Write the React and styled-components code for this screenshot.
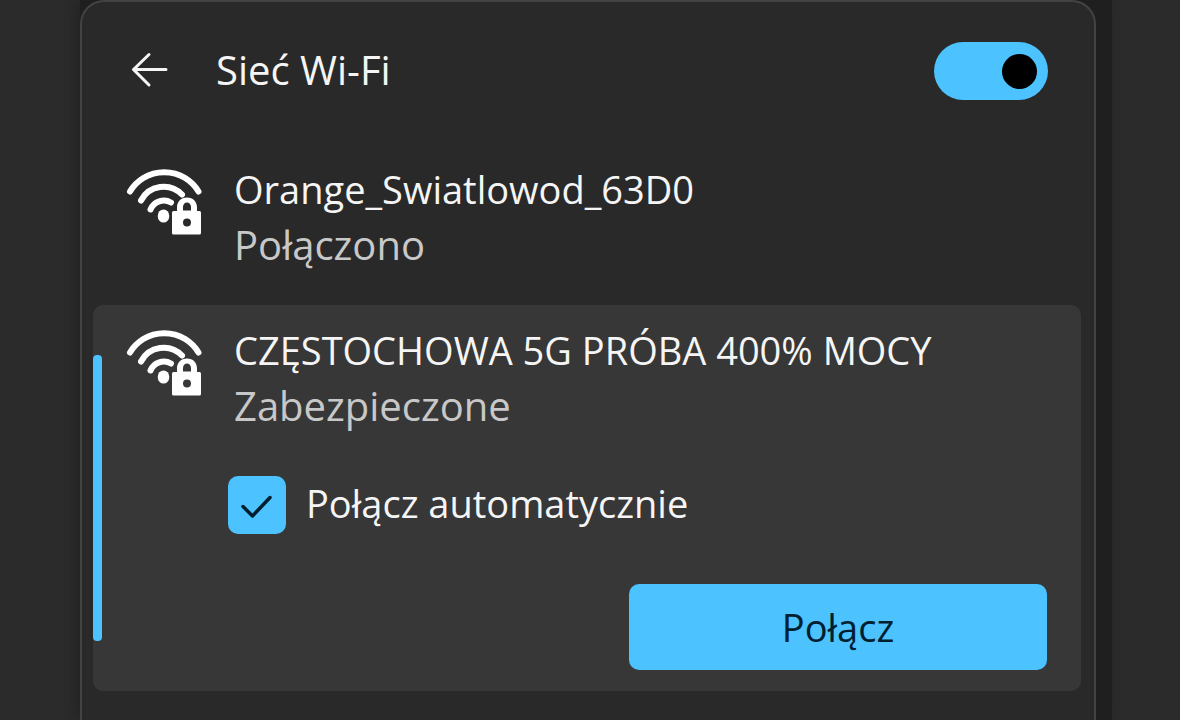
import React, { useState } from 'react';
import styled, { createGlobalStyle } from 'styled-components';

const colors = {
  desktop: '#2b2b2b',
  shadow: '#1f1f1f',
  panel: '#292929',
  border: '#434343',
  selected: '#373737',
  accent: '#4cc2ff',
  onAccent: '#00202f',
  text: '#f5f5f5',
  muted: '#c8c8c8'
};

const App = () => {
  const [enabled, setEnabled] = useState(true);
  const [autoConnect, setAutoConnect] = useState(true);

  return (
    <Desktop>
      <GlobalStyle />
      <Shade>
        <Panel>
          <Header>
            <BackButton type="button" aria-label="Wstecz">
              <BackIcon />
            </BackButton>
            <Title id="wifi-title">Sieć Wi-Fi</Title>
            <Switch
              type="checkbox"
              role="switch"
              aria-labelledby="wifi-title"
              checked={enabled}
              onChange={(e) => setEnabled(e.target.checked)}
            />
          </Header>

          <NetworkList>
            <Network>
              <NetworkRow name="Orange_Swiatlowod_63D0" status="Połączono" />
            </Network>

            <Network $selected>
              <NetworkRow name="CZĘSTOCHOWA 5G PRÓBA 400% MOCY" status="Zabezpieczone" />
              <Option htmlFor="auto-connect">
                <CheckWrapper>
                  <Checkbox
                    type="checkbox"
                    id="auto-connect"
                    checked={autoConnect}
                    onChange={(e) => setAutoConnect(e.target.checked)}
                  />
                  {autoConnect && <CheckIcon />}
                </CheckWrapper>
                Połącz automatycznie
              </Option>
              <Actions>
                <ConnectButton type="button">Połącz</ConnectButton>
              </Actions>
            </Network>
          </NetworkList>
        </Panel>
      </Shade>
    </Desktop>
  );
};

const NetworkRow = ({ name, status }) => (
  <Row>
    <WifiLockIcon />
    <div>
      <NetworkName>{name}</NetworkName>
      <NetworkStatus>{status}</NetworkStatus>
    </div>
  </Row>
);

const BackIcon = () => (
  <svg width="40" height="40" viewBox="0 0 40 40" fill="none" stroke="currentColor" strokeWidth="3" strokeLinecap="round" strokeLinejoin="round" aria-hidden="true">
    <path d="M37 18.5H4.5M20 3.5L4.5 18.5L20 34" />
  </svg>
);

const WifiLockIcon = () => (
  <WifiSvg width="80" height="76" viewBox="0 -4 80 76" fill="none" stroke="#fff" strokeWidth="6" strokeLinecap="round" aria-hidden="true">
    <path d="M5 26.5A40 40 0 0 1 73.5 26.5" />
    <path d="M16 35.5A25.5 25.5 0 0 1 57 29.5" />
    <path d="M25.5 44.5A14.5 14.5 0 0 1 46 37.5" />
    <ellipse cx="38.5" cy="51" rx="5.8" ry="6.6" fill="#fff" stroke="none" />
    {/* padlock with shackle opening and keyhole cut out */}
    <path
      fill="#fff"
      stroke="none"
      fillRule="evenodd"
      d="M52 46V42.5C52 36.5 56 32.5 62 32.5S72 36.5 72 42.5V46H74.5A1.5 1.5 0 0 1 76 47.5V68A1.5 1.5 0 0 1 74.5 69.5H48.5A1.5 1.5 0 0 1 47 68V47.5A1.5 1.5 0 0 1 48.5 46ZM58 45.5H66V42A4 4.5 0 0 0 58 42ZM66 57.5A4 4 0 1 0 58 57.5A4 4 0 1 0 66 57.5Z"
    />
  </WifiSvg>
);

const CheckIcon = () => (
  <CheckSvg viewBox="0 0 58 58" fill="none" stroke={colors.onAccent} strokeWidth="3.5" strokeLinecap="round" strokeLinejoin="round" aria-hidden="true">
    <path d="M15 30.5L24.5 40L42 21.5" />
  </CheckSvg>
);

// Styled Components
const GlobalStyle = createGlobalStyle`
  *, *::before, *::after {
    box-sizing: border-box;
  }
  body {
    margin: 0;
    background: ${colors.desktop};
    color: ${colors.text};
    font-family: 'Segoe UI', 'Open Sans', 'Noto Sans', sans-serif;
    font-size: 38px;
  }
`;

const Desktop = styled.div`
  display: flex;
  min-height: 100vh;
  padding: 0 68px 0 80px;
`;

const Shade = styled.div`
  display: flex;
  flex: 1;
  min-width: 0;
  padding-right: 16px;
  background: ${colors.shadow};
  box-shadow: -4px 0 12px rgba(0, 0, 0, 0.2);
`;

const Panel = styled.main`
  flex: 1;
  min-width: 0;
  background: ${colors.panel};
  border: 2px solid ${colors.border};
  border-bottom: none;
  border-radius: 24px 24px 0 0;
`;

const Header = styled.header`
  display: flex;
  align-items: center;
  height: 138px;
  padding: 0 46px 0 47px;
`;

const BackButton = styled.button`
  display: flex;
  padding: 0;
  margin-right: 47px;
  border: none;
  background: none;
  color: ${colors.text};
  cursor: pointer;
`;

const Title = styled.h1`
  flex: 1;
  margin: 0;
  padding-bottom: 2px;
  font-size: 40px;
  font-weight: 400;
  line-height: 56px;
`;

const Switch = styled.input`
  display: flex;
  align-items: center;
  justify-content: flex-start;
  appearance: none;
  width: 114px;
  height: 58px;
  margin: 0;
  padding: 0 11px;
  border-radius: 29px;
  background: #5a5a5a;
  cursor: pointer;

  &::before {
    content: '';
    width: 35px;
    height: 35px;
    border-radius: 50%;
    background: #000;
  }
  &:checked {
    justify-content: flex-end;
    background: ${colors.accent};
  }
`;

const NetworkList = styled.ul`
  list-style: none;
  margin: 0;
  padding: 4px 13px 24px 11px;
`;

const Network = styled.li`
  position: relative;
  padding: ${props => props.$selected ? '17px 34px 21px 32px' : '17px 34px 32px 32px'};
  border-radius: 10px;
  background: ${props => props.$selected ? colors.selected : 'transparent'};

  &::before {
    content: '';
    display: ${props => props.$selected ? 'block' : 'none'};
    position: absolute;
    left: 0;
    top: 50px;
    bottom: 50px;
    width: 9px;
    border-radius: 4px;
    background: ${colors.accent};
  }
`;

const Row = styled.div`
  display: flex;
  align-items: flex-start;
  gap: 29px;
`;

const WifiSvg = styled.svg`
  flex: none;
`;

const NetworkName = styled.div`
  font-size: 38px;
  line-height: 56px;
`;

const NetworkStatus = styled.div`
  font-size: 40px;
  line-height: 56px;
  color: ${colors.muted};
`;

const Option = styled.label`
  display: flex;
  align-items: flex-start;
  gap: 20px;
  width: fit-content;
  margin: 42px 0 0 103px;
  line-height: 54px;
  cursor: pointer;
`;

const CheckWrapper = styled.span`
  display: grid;
  flex: none;
  width: 58px;
  height: 58px;

  > * {
    grid-area: 1 / 1;
  }
`;

const Checkbox = styled.input`
  appearance: none;
  width: 100%;
  height: 100%;
  margin: 0;
  border: 2px solid #9a9a9a;
  border-radius: 10px;
  cursor: pointer;

  &:checked {
    border-color: ${colors.accent};
    background: ${colors.accent};
  }
`;

const CheckSvg = styled.svg`
  pointer-events: none;
`;

const Actions = styled.div`
  display: flex;
  justify-content: flex-end;
  margin-top: 50px;
`;

const ConnectButton = styled.button`
  width: 418px;
  max-width: 100%;
  height: 86px;
  padding: 0;
  border: none;
  border-radius: 10px;
  background: ${colors.accent};
  color: ${colors.onAccent};
  font-family: inherit;
  font-size: 38px;
  cursor: pointer;

  &:hover {
    background: #47b1e8;
  }
`;

export default App;
